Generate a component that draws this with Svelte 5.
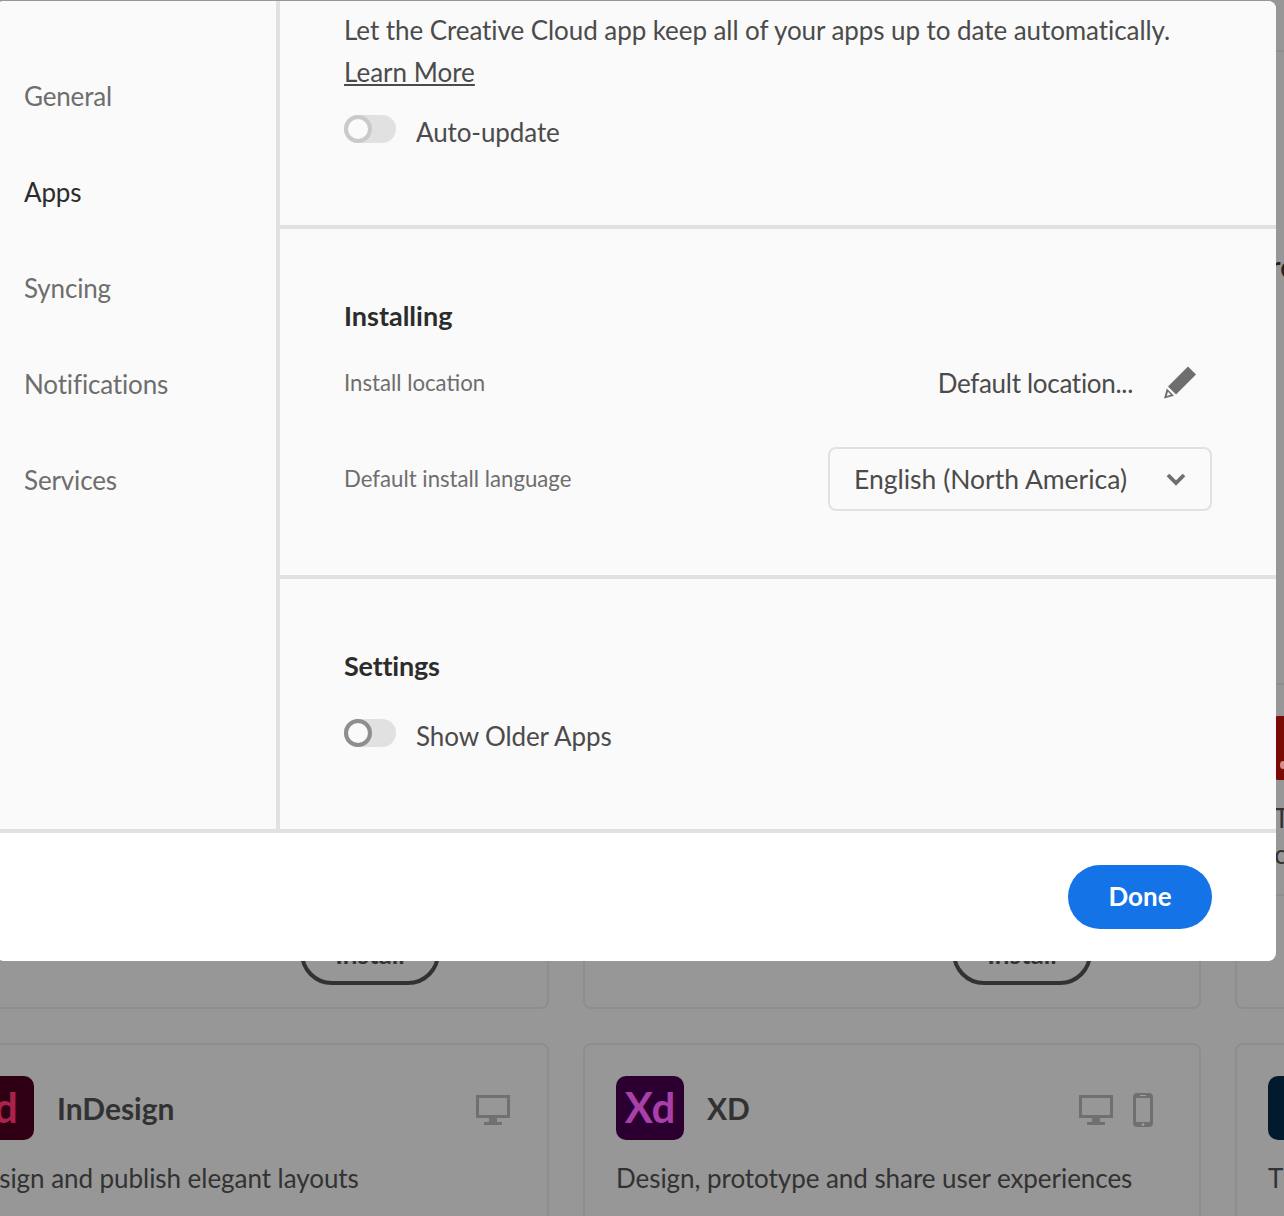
<script>
  const sections = ['General', 'Apps', 'Syncing', 'Notifications', 'Services'];
</script>

<div class="page">
  <div class="backdrop">
    <div class="topbar"></div>
    <div class="heading">Pro</div>
    <div class="grid">
      <article class="card first">
        <div class="divider"></div>
        <div class="foot"><span class="install">Install</span></div>
      </article>
      <article class="card">
        <div class="divider"></div>
        <div class="foot"><span class="install">Install</span></div>
      </article>
      <article class="card">
        <div class="head"><div class="logo red"></div></div>
        <p class="desc indent">Tools and<br />icons and more</p>
        <div class="divider"></div>
        <div class="foot"><span class="install">Install</span></div>
      </article>
      <article class="card first">
        <div class="head">
          <div class="logo id">Id</div>
          <h3>InDesign</h3>
          <svg class="dev" width="34" height="30" viewBox="0 0 34 30"><use href="#desktop"/></svg>
        </div>
        <p class="desc">Design and publish elegant layouts</p>
      </article>
      <article class="card">
        <div class="head">
          <div class="logo xd">Xd</div>
          <h3>XD</h3>
          <span class="devs">
            <svg width="34" height="30" viewBox="0 0 34 30"><use href="#desktop"/></svg>
            <svg width="20" height="34" viewBox="0 0 20 34"><path fill="#707070" fill-rule="evenodd" d="M4 0h12a4 4 0 0 1 4 4v26a4 4 0 0 1-4 4H4a4 4 0 0 1-4-4V4a4 4 0 0 1 4-4ZM3 5v24h14V5Z"/><circle cx="10" cy="31.5" r="1.3" fill="#a0a0a0"/><rect x="7" y="2" width="6" height="1" fill="#a0a0a0"/></svg>
          </span>
        </div>
        <p class="desc">Design, prototype and share user experiences</p>
      </article>
      <article class="card">
        <div class="head"><div class="logo navy"></div></div>
        <p class="desc">The best</p>
      </article>
    </div>
  </div>

  <svg width="0" height="0" class="defs"><defs>
    <g id="desktop" fill="#707070">
      <path fill-rule="evenodd" d="M0 0h34v23H0zM3 3v17h28V3z"/>
      <path d="M13 23h8v4h-8zM8 27h18v3H8z"/>
    </g>
  </defs></svg>

  <div class="modal">
    <div class="body">
      <nav class="side">
        {#each sections as s}
          <div class="item" class:on={s === 'Apps'}>{s}</div>
        {/each}
      </nav>
      <main class="content">
        <section class="sec one">
          <p class="lead">Let the Creative Cloud app keep all of your apps up to date automatically.</p>
          <a class="link" href="#top">Learn More</a>
          <div class="toggle-row">
            <span class="switch light"></span><span>Auto-update</span>
          </div>
        </section>
        <section class="sec two">
          <h2>Installing</h2>
          <div class="row loc">
            <span class="label">Install location</span>
            <span class="val">Default location...
              <svg width="34" height="34" viewBox="0 0 34 34"><path fill="#6e6e6e" d="M25 1.5 33 9.5 13 29.5 5 21.5Z"/><path fill="#6e6e6e" fill-rule="evenodd" d="M3.8 23.5 11 30.7 1 33.5ZM5 26.8 3.7 31 7.7 29.7Z"/></svg>
            </span>
          </div>
          <div class="row lang">
            <span class="label">Default install language</span>
            <div class="select">
              <span>English (North America)</span>
              <svg width="20" height="14" viewBox="0 0 20 14"><path d="M2 3 10 11 18 3" fill="none" stroke="#6e6e6e" stroke-width="3.8"/></svg>
            </div>
          </div>
        </section>
        <section class="sec three">
          <h2>Settings</h2>
          <div class="toggle-row">
            <span class="switch"></span><span>Show Older Apps</span>
          </div>
        </section>
      </main>
    </div>
    <footer class="foot-bar"><button>Done</button></footer>
  </div>
</div>

<style>
  :global(body) { margin: 0; }
  .page {
    position: relative; width: 1284px; height: 1216px; overflow: hidden;
    background: #979797; font-family: Lato, "Open Sans", sans-serif; color: #4b4b4b;
  }
  .defs { position: absolute; }
  .backdrop { position: absolute; inset: 0; }
  .topbar { height: 50px; border-bottom: 2px solid #8e8e8e; }
  .heading { height: 631px; padding-top: 196px; box-sizing: border-box; padding-left: 1252px; font-size: 30px; color: #222; white-space: nowrap; }
  .grid { display: grid; grid-template-columns: repeat(3, 618px); grid-template-rows: 326px 300px; gap: 34px; margin-left: -69px; }
  .card { box-sizing: border-box; border: 2px solid #8e8e8e; border-radius: 8px; padding: 31px 31px 0; display: flex; flex-direction: column; }
  .card.first { padding-left: 33px; }
  .head { display: flex; align-items: center; height: 64px; flex: none; }
  .logo { position: relative; width: 68px; height: 64px; border-radius: 10px; font-size: 42px; font-weight: 700; line-height: 62px; text-align: center; flex: none; }
  .red { background: #7a0a04; }
  .red::after { content: ''; position: absolute; left: 12px; bottom: 11px; width: 6px; height: 8px; border-radius: 50%; background: #d98a8a; }
  .navy { background: #021a2e; }
  .id { background: #2f0014; color: #a8224c; }
  .xd { background: #2b0030; color: #a93fa8; }
  h3 { margin: 0 0 0 23px; font-size: 30px; font-weight: 700; color: #323232; flex: 1; }
  .dev { margin: 4px 6px 0 0; }
  .devs { display: flex; gap: 20px; align-items: center; margin: 4px 15px 0 0; }
  .desc { margin: 20px 0 0; font-size: 26px; letter-spacing: -0.05px; color: #323232; line-height: 36px; }
  .desc.indent { text-indent: 6px; white-space: nowrap; }
  .divider { margin-top: auto; border-top: 2px solid #8e8e8e; }
  .foot { display: flex; justify-content: flex-end; padding: 25px 76px 22px 0; flex: none; }
  .install { box-sizing: border-box; width: 140px; height: 64px; border: 4px solid #323232; border-radius: 32px; font-size: 26px; font-weight: 700; text-align: center; line-height: 58px; color: #323232; }

  .modal { position: absolute; left: -4px; top: 1px; width: 1280px; height: 960px; background: #fff; border-radius: 8px; overflow: hidden; display: flex; flex-direction: column; }
  .body { height: 828px; display: flex; flex: none; background: #fafafa; border-bottom: 4px solid #e1e1e1; }
  .side { width: 284px; box-sizing: border-box; padding: 47px 0 0 28px; border-right: 4px solid #e1e1e1; flex: none; }
  .item { height: 96px; line-height: 96px; font-size: 26px; letter-spacing: -0.15px; color: #6e6e6e; }
  .item.on { color: #2c2c2c; }
  .content { flex: 1; min-width: 0; }
  .sec { box-sizing: border-box; padding: 0 64px; border-bottom: 4px solid #e1e1e1; font-size: 26px; }
  .sec:last-child { border-bottom: 0; }
  .one { height: 228px; padding-top: 8px; line-height: 42px; }
  .lead { margin: 0; letter-spacing: -0.07px; white-space: nowrap; }
  .link { color: #4b4b4b; }
  .toggle-row { display: flex; align-items: center; gap: 20px; letter-spacing: -0.1px; }
  .one .toggle-row { margin-top: 18px; }
  .switch { position: relative; width: 52px; height: 28px; margin-bottom: 6px; border-radius: 14px; background: #e1e1e1; flex: none; }
  .switch::after { content: ''; position: absolute; left: 0; top: 0; box-sizing: border-box; width: 28px; height: 28px; border-radius: 50%; border: 4px solid #8e8e8e; background: #fafafa; }
  .switch.light::after { border-color: #cacaca; }
  .two { height: 350px; padding-top: 69px; }
  h2 { margin: 0; font-size: 27px; font-weight: 700; line-height: 36px; color: #2c2c2c; }
  .three h2 { letter-spacing: -0.2px; }
  .row { display: flex; justify-content: space-between; align-items: center; }
  .label { font-size: 22.2px; color: #6e6e6e; margin-bottom: 2px; }
  .loc { margin-top: 17px; height: 64px; padding-right: 15px; }
  .val { display: flex; align-items: center; gap: 30px; letter-spacing: -0.3px; }
  .val svg { margin-bottom: 2px; }
  .lang { margin-top: 32px; height: 64px; }
  .select { box-sizing: border-box; width: 384px; height: 64px; border: 2px solid #e1e1e1; border-radius: 8px; display: flex; align-items: center; justify-content: space-between; padding: 0 24px; font-size: 26.5px; }
  .three { height: 250px; padding-top: 69px; }
  .three .toggle-row { margin-top: 35px; }
  .foot-bar { flex: 1; display: flex; justify-content: flex-end; align-items: center; padding-right: 64px; }
  button { width: 144px; height: 64px; border: 0; border-radius: 32px; padding: 0 0 2px; background: #1473e6; color: #fff; font: 700 26px Lato, sans-serif; }
</style>
